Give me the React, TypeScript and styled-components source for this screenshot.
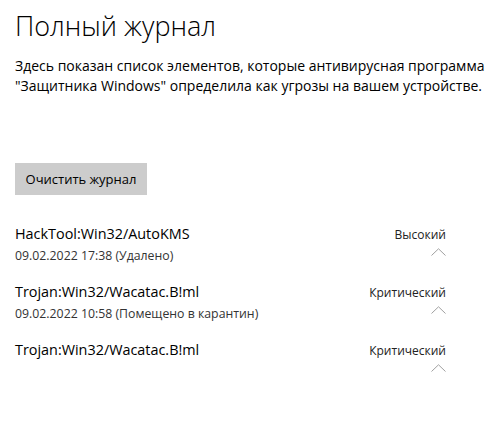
import React from "react";
import styled, { createGlobalStyle } from "styled-components";

const Global = createGlobalStyle`
  html, body { margin: 0; padding: 0; background: #fff; }
  body { font-family: "Open Sans", "Noto Sans", sans-serif; color: #000; }
`;

const Page = styled.div`
  width: 504px;
  height: 429px;
  box-sizing: border-box;
  padding: 8px 15px 0 15px;
  display: flex;
  flex-direction: column;
  overflow: hidden;
`;

const Title = styled.h1`
  margin: 0;
  font-size: 27px;
  font-weight: 300;
  line-height: 36px;
  color: #000;
`;

const Description = styled.p`
  margin: 12px 0 0 0;
  font-size: 14px;
  line-height: 20px;
  color: #000;
  white-space: nowrap;
`;

const ClearButton = styled.button`
  margin-top: 67px;
  align-self: flex-start;
  width: 132px;
  height: 32px;
  padding: 0;
  border: none;
  background: #cccccc;
  font-family: inherit;
  font-size: 13px;
  color: #000;
`;

const List = styled.div`
  margin-top: 29px;
  display: flex;
  flex-direction: column;
  gap: 15px;
  width: 431px;
`;

const Item = styled.div`
  display: flex;
  justify-content: space-between;
  align-items: flex-start;
  height: 43px;
`;

const Info = styled.div`
  display: flex;
  flex-direction: column;
`;

const Name = styled.div`
  font-size: 14.4px;
  line-height: 20px;
  color: #000;
`;

const Meta = styled.div`
  margin-top: 3px;
  font-size: 12.3px;
  line-height: 17px;
  color: #333;
`;

const Side = styled.div`
  display: flex;
  flex-direction: column;
  align-items: flex-end;
  padding-top: 3px;
`;

const Severity = styled.div`
  font-size: 12px;
  line-height: 16px;
  color: #222;
`;

const Chevron = styled.svg`
  margin-top: 5px;
  width: 15px;
  height: 8px;
`;

type Entry = { name: string; meta?: string; severity: string };

const entries: Entry[] = [
  { name: "HackTool:Win32/AutoKMS", meta: "09.02.2022 17:38 (Удалено)", severity: "Высокий" },
  { name: "Trojan:Win32/Wacatac.B!ml", meta: "09.02.2022 10:58 (Помещено в карантин)", severity: "Критический" },
  { name: "Trojan:Win32/Wacatac.B!ml", severity: "Критический" },
];

export default function App() {
  return (
    <>
      <Global />
      <Page>
        <Title>Полный журнал</Title>
        <Description>
          Здесь показан список элементов, которые антивирусная программа
          <br />
          "Защитника Windows" определила как угрозы на вашем устройстве.
        </Description>
        <ClearButton>Очистить журнал</ClearButton>
        <List>
          {entries.map((e, i) => (
            <Item key={i}>
              <Info>
                <Name>{e.name}</Name>
                {e.meta && <Meta>{e.meta}</Meta>}
              </Info>
              <Side>
                <Severity>{e.severity}</Severity>
                <Chevron viewBox="0 0 15 8">
                  <polyline points="0.5,7.5 7.5,0.8 14.5,7.5" fill="none" stroke="#a0a0a0" strokeWidth="1" />
                </Chevron>
              </Side>
            </Item>
          ))}
        </List>
      </Page>
    </>
  );
}
